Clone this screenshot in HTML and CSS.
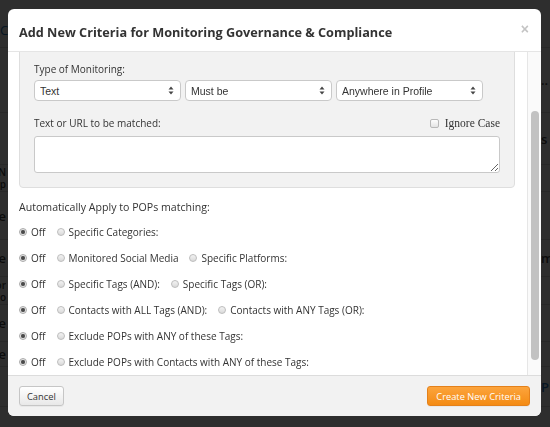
FILE: index.html
```html
<!DOCTYPE html>
<html lang="en">
<head>
<meta charset="utf-8">
<title>Add New Criteria</title>
<link rel="stylesheet" href="styles.css">
</head>
<body>
<div class="page">
  <div class="page-nav"><span class="nav-link">Co</span><span class="peek-r"></span></div>
  <div class="page-row r1"><span class="peek-l"></span><span class="peek-r">..</span></div>
  <div class="page-row r2"><span class="peek-l"></span><span class="peek-r">s</span></div>
  <div class="page-row r3"><span class="peek-l two">n N<br>p</span><span class="peek-r"></span></div>
  <div class="page-row r4"><span class="peek-l">e</span><span class="peek-r"></span></div>
  <div class="page-row r5"><span class="peek-l">e</span><span class="peek-r">m</span></div>
  <div class="page-row r6"><span class="peek-l two">or<br>ro</span><span class="peek-r"></span></div>
  <div class="page-row r7"><span class="peek-l">e</span><span class="peek-r"></span></div>
  <div class="page-row r8"><span class="peek-l">e</span><span class="peek-r"></span></div>
  <div class="page-row r9"><span class="peek-l"></span><span class="peek-r nav-link">P</span></div>
</div>

<div class="backdrop"></div>

<div class="modal">
  <div class="modal-header">
    <h3 class="modal-title">Add New Criteria for Monitoring Governance &amp; Compliance</h3>
    <button class="close" type="button">×</button>
  </div>

  <div class="modal-main">
    <div class="modal-body" id="modalBody">
      <div class="well">
        <div class="field">
          <label class="lbl">Criteria Name:</label>
          <input class="text-input" type="text">
        </div>
        <div class="field">
          <label class="lbl">Type of Monitoring:</label>
          <div class="select-row">
            <div class="select-box">
              <select><option>Text</option></select>
              <svg class="sel-arrows" width="6" height="9" viewBox="0 0 6 9"><path d="M0.5 3.6 L3 0.6 L5.5 3.6 Z M0.5 5.4 L3 8.4 L5.5 5.4 Z" fill="#454545"/></svg>
            </div>
            <div class="select-box">
              <select><option>Must be</option></select>
              <svg class="sel-arrows" width="6" height="9" viewBox="0 0 6 9"><path d="M0.5 3.6 L3 0.6 L5.5 3.6 Z M0.5 5.4 L3 8.4 L5.5 5.4 Z" fill="#454545"/></svg>
            </div>
            <div class="select-box">
              <select><option>Anywhere in Profile</option></select>
              <svg class="sel-arrows" width="6" height="9" viewBox="0 0 6 9"><path d="M0.5 3.6 L3 0.6 L5.5 3.6 Z M0.5 5.4 L3 8.4 L5.5 5.4 Z" fill="#454545"/></svg>
            </div>
          </div>
        </div>
        <div class="field last">
          <div class="lbl-row">
            <label class="lbl">Text or URL to be matched:</label>
            <label class="check"><input type="checkbox"><span class="check-text">Ignore Case</span></label>
          </div>
          <textarea class="textarea"></textarea>
        </div>
      </div>

      <div class="apply-heading">Automatically Apply to POPs matching:</div>

      <div class="opt-row">
        <label class="opt"><input type="radio" name="g1" checked><span>Off</span></label>
        <label class="opt"><input type="radio" name="g1"><span>Specific Categories:</span></label>
      </div>
      <div class="opt-row">
        <label class="opt"><input type="radio" name="g2" checked><span>Off</span></label>
        <label class="opt"><input type="radio" name="g2"><span>Monitored Social Media</span></label>
        <label class="opt"><input type="radio" name="g2"><span>Specific Platforms:</span></label>
      </div>
      <div class="opt-row">
        <label class="opt"><input type="radio" name="g3" checked><span>Off</span></label>
        <label class="opt"><input type="radio" name="g3"><span>Specific Tags (AND):</span></label>
        <label class="opt"><input type="radio" name="g3"><span>Specific Tags (OR):</span></label>
      </div>
      <div class="opt-row">
        <label class="opt"><input type="radio" name="g4" checked><span>Off</span></label>
        <label class="opt"><input type="radio" name="g4"><span>Contacts with ALL Tags (AND):</span></label>
        <label class="opt"><input type="radio" name="g4"><span>Contacts with ANY Tags (OR):</span></label>
      </div>
      <div class="opt-row">
        <label class="opt"><input type="radio" name="g5" checked><span>Off</span></label>
        <label class="opt"><input type="radio" name="g5"><span>Exclude POPs with ANY of these Tags:</span></label>
      </div>
      <div class="opt-row">
        <label class="opt"><input type="radio" name="g6" checked><span>Off</span></label>
        <label class="opt"><input type="radio" name="g6"><span>Exclude POPs with Contacts with ANY of these Tags:</span></label>
      </div>
    </div>
    <div class="scrollbar"><div class="scroll-thumb"></div></div>
  </div>

  <div class="modal-footer">
    <button class="btn" type="button">Cancel</button>
    <button class="btn btn-primary" type="button">Create New Criteria</button>
  </div>
</div>
<script src="script.js"></script>
</body>
</html>
```

FILE: styles.css
```css
* { box-sizing: border-box; }

html, body {
  margin: 0;
  padding: 0;
  height: 100%;
}

body {
  background: #fff;
  font-family: "Open Sans", "Noto Sans", sans-serif;
  font-size: 10px;
  color: #333;
  overflow: hidden;
}

/* ---------- background page (under the backdrop) ---------- */
.page {
  width: 550px;
}
.page-nav {
  height: 48px;
  border-bottom: 1px solid #ddd;
  display: flex;
  justify-content: space-between;
  align-items: flex-end;
  padding-bottom: 8px;
  font-size: 13px;
}
.nav-link { color: #2a7bc0; }
.page-row {
  display: flex;
  justify-content: space-between;
  align-items: center;
  border-bottom: 1px solid #ddd;
  font-size: 13px;
  font-weight: 600;
  color: #444;
}
.peek-l {
  width: 6px;
  overflow: hidden;
  white-space: nowrap;
  display: flex;
  justify-content: flex-end;
  text-align: right;
}
.peek-l.two { line-height: 12px; font-size: 10px; }
.peek-r {
  width: 9px;
  overflow: hidden;
  white-space: nowrap;
}
.r1 { height: 65px; }
.r2 { height: 52px; }
.r3 { height: 27px; }
.r4 { height: 48px; }
.r5 { height: 37px; }
.r6 { height: 28px; }
.r7 { height: 37px; }
.r8 { height: 25px; }
.r9 { height: 40px; }

.backdrop {
  position: fixed;
  inset: 0;
  background: rgba(0, 0, 0, 0.82);
}

/* ---------- modal ---------- */
.modal {
  position: fixed;
  left: 8px;
  top: 9px;
  width: 533px;
  height: 407px;
  background: #fff;
  border-radius: 6px;
  overflow: hidden;
  display: flex;
  flex-direction: column;
}

.modal-header {
  flex: 0 0 43px;
  border-bottom: 1px solid #e5e5e5;
  display: flex;
  align-items: center;
  justify-content: space-between;
  padding: 3px 12px 0 11px;
}
.modal-title {
  margin: 0;
  font-size: 12.7px;
  font-weight: 700;
  color: #333;
}
.close {
  border: 0;
  background: none;
  padding: 0;
  margin: -6px 0 0 0;
  font-family: "Liberation Sans", sans-serif;
  font-size: 14px;
  font-weight: 700;
  line-height: 1;
  color: #c4c4c4;
}

.modal-main {
  flex: 1 1 auto;
  min-height: 0;
  display: flex;
}
.modal-body {
  flex: 1 1 auto;
  min-width: 0;
  overflow: hidden;
  padding: 11px 0 20px 0;
}
.scrollbar {
  flex: 0 0 14px;
  background: #fafafa;
  border-left: 1px solid #e6e6e6;
  padding: 59px 2px 0 3px;
}
.scroll-thumb {
  height: 249px;
  border-radius: 4px;
  background: #c2c2c2;
}

.well {
  margin: 0 12px 0 11px;
  background: #f2f2f2;
  border: 1px solid #dedede;
  border-radius: 4px;
  padding: 14px;
}
.field { margin-bottom: 13px; }
.field.last { margin-bottom: 0; }
.lbl {
  display: block;
  line-height: 18px;
  margin-bottom: 2px;
  color: #333;
}
.text-input {
  display: block;
  width: 100%;
  height: 25px;
  border: 1px solid #ccc;
  border-radius: 3px;
  background: #fff;
}

.select-row {
  display: flex;
  gap: 4px;
}
.select-box {
  position: relative;
  width: 147px;
  height: 21px;
}
.select-box select {
  appearance: none;
  -webkit-appearance: none;
  width: 100%;
  height: 100%;
  border: 1px solid #c9c9c9;
  border-radius: 4px;
  background: #fff;
  padding: 0 0 0 5px;
  font-family: "Liberation Sans", Arial, sans-serif;
  font-size: 10.5px;
  color: #333;
  outline: none;
}
.sel-arrows {
  position: absolute;
  right: 7px;
  top: 6px;
  pointer-events: none;
}

.lbl-row {
  display: flex;
  justify-content: space-between;
  align-items: center;
  height: 18px;
  margin-bottom: 4px;
}
.lbl-row .lbl { margin-bottom: 0; }
.check {
  display: flex;
  align-items: center;
  gap: 6px;
}
.check input {
  appearance: none;
  -webkit-appearance: none;
  margin: 0;
  width: 9px;
  height: 9px;
  border: 1px solid #b8b8b8;
  border-radius: 2px;
  background: linear-gradient(#fdfdfd, #e4e4e4);
}
.check-text {
  font-family: "Liberation Serif", "Times New Roman", serif;
  font-size: 11.5px;
  color: #333;
}
.textarea {
  display: block;
  width: 100%;
  height: 37px;
  border: 1px solid #c9c9c9;
  border-radius: 3px;
  background: #fff;
  resize: vertical;
  margin: 0;
}

.apply-heading {
  margin: 11px 0 4px 11px;
  line-height: 16px;
  font-size: 10.6px;
}
.opt-row {
  height: 26px;
  display: flex;
  align-items: center;
  padding-left: 11px;
}
.opt {
  display: flex;
  align-items: center;
  margin-right: 11px;
  line-height: 14px;
}
.opt input {
  appearance: none;
  -webkit-appearance: none;
  margin: 0 4px 0 0;
  width: 8px;
  height: 8px;
  border-radius: 50%;
  border: 1px solid #bdbdbd;
  background: linear-gradient(#f3f3f3, #dadada);
}
.opt input:checked {
  border-color: #a9a9a9;
  background: radial-gradient(circle, #4a4a4a 0 1.4px, #7d7d7d 2px, #e6e6e6 2.4px);
}

.modal-footer {
  flex: 0 0 41px;
  border-top: 1px solid #dcdcdc;
  background: #f2f2f2;
  display: flex;
  align-items: center;
  justify-content: space-between;
  padding: 0 11px;
}
.btn {
  height: 20px;
  padding: 0 7px;
  border: 1px solid #c6c6c6;
  border-radius: 3px;
  background: linear-gradient(#ffffff, #e8e8e8);
  font-family: "Open Sans", sans-serif;
  font-size: 9.3px;
  color: #333;
  box-shadow: 0 1px 0 rgba(0,0,0,0.04);
}
.btn-primary {
  border-color: #e4811b;
  background: linear-gradient(#fca43c, #f48b14);
  color: #fff;
  padding: 0 8px;
}
```

FILE: script.js
```js
document.getElementById('modalBody').scrollTop = 76;
```
